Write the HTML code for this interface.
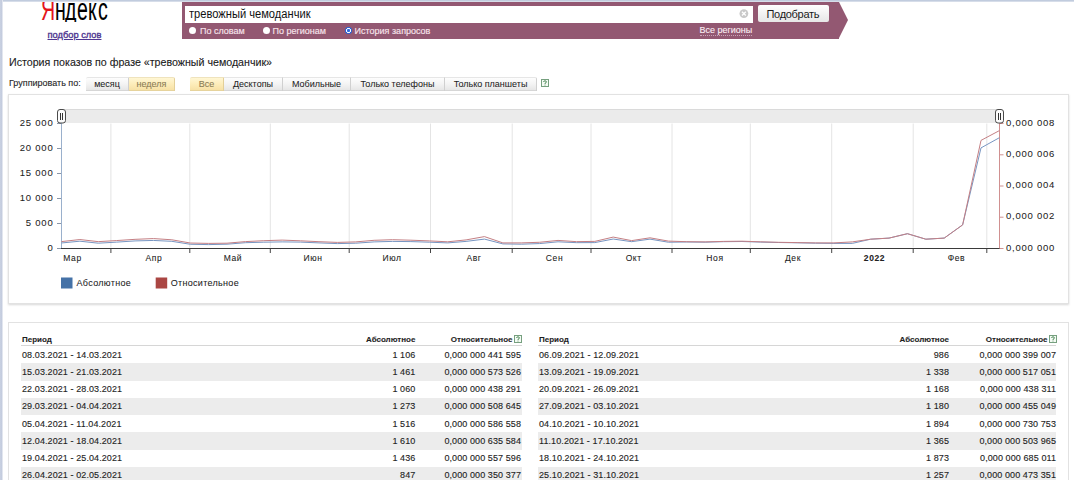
<!DOCTYPE html>
<html><head><meta charset="utf-8">
<style>
*{margin:0;padding:0;box-sizing:border-box}
html,body{width:1074px;height:480px;overflow:hidden;background:#fff;font-family:"Liberation Sans",sans-serif;color:#222}
.a{position:absolute;white-space:nowrap}
.lg{position:absolute;top:-8.1px;font-size:31px;color:#000;-webkit-text-stroke:0.1px currentColor;transform:scaleX(0.63);transform-origin:0 0;line-height:normal}
#topb{position:absolute;z-index:5;left:0;top:0;width:1074px;height:2px;background:linear-gradient(#c2cddf 0,#c0cbdd 1px,#d6dde9 1px,#d6dde9 2px)}
#leftb{position:absolute;z-index:5;left:0;top:0;width:3px;height:480px;background:linear-gradient(to right,#c9d1e2 0,#c3cbdd 2px,#e2e6ef 2px,#e2e6ef 3px)}
#sub{left:47.5px;top:30.2px;font-size:9.3px;color:#4e3590;text-decoration:underline;-webkit-text-stroke:0.35px #4e3590}
#bar{position:absolute;left:182px;top:2px;width:657px;height:36.5px;background:#935872}
#arrow{position:absolute;left:839px;top:2px;width:0;height:0;border-top:18.25px solid transparent;border-bottom:18.25px solid transparent;border-left:9px solid #935872}
#inp{position:absolute;left:185px;top:5.5px;width:568px;height:17px;background:#fff}
#q{left:189px;top:6.8px;font-size:12.3px;color:#111;transform:scaleX(0.905);transform-origin:0 0}
#clr{left:739.6px;top:9.3px;width:8.6px;height:8.6px;border-radius:50%;background:#c9c9c9;position:absolute}
#btn{position:absolute;left:758px;top:5px;width:71px;height:17px;background:linear-gradient(#fff,#e6e6e6);border-radius:2px}
#btnt{left:766.5px;top:7.5px;font-size:11px;letter-spacing:-0.3px;color:#1a1a1a}
.rad{position:absolute;width:7.4px;height:7.4px;border-radius:50%;background:#fff;top:27px}
.rl{top:26px;font-size:9px;color:#f8e4ec;-webkit-text-stroke:0.15px #f8e4ec}
#regs{left:699.5px;top:26px;font-size:9px;color:#fbeef3;border-bottom:1px dotted #c9a3b6;line-height:9px;padding-bottom:0;-webkit-text-stroke:0.1px #fbeef3}
#h1{left:9px;top:56.3px;font-size:10.66px;color:#1a1a1a;-webkit-text-stroke:0.1px #1a1a1a}
#grp{left:9px;top:78px;font-size:9px;color:#262626;-webkit-text-stroke:0.1px #262626}
.tb{position:absolute;top:76.5px;height:14px;background:linear-gradient(#fdfdfd 0,#f4f4f4 45%,#e4e4e4 100%);border-right:1px solid #d0d0d0;border-top:1px solid #e6e6e6;box-shadow:inset 0 -1px #d6d6d6;font-size:9px;text-align:center;line-height:13.5px;color:#1e1e1e;-webkit-text-stroke:0.05px #1e1e1e}
.tb.sel{background:linear-gradient(#fff6d4 0,#fdedbb 45%,#f6dfa2 100%);border-right-color:#e3cf98;border-top-color:#efe3bd;box-shadow:inset 0 -1px #e6d39c;color:#8c7d55;-webkit-text-stroke:0.1px #8c7d55}
.help{position:absolute;width:8px;height:8px;border:1px solid #7fb27f;font-size:7px;line-height:6px;text-align:center;color:#3a8a3a;font-weight:bold}
#box1{position:absolute;left:8px;top:94px;width:1061px;height:210px;border:1px solid #e2e2e2;box-shadow:0 1px 2px #d8d8d8}
#box2{position:absolute;left:8px;top:322px;width:1061px;height:170px;border:1px solid #e2e2e2}
svg{position:absolute;left:0;top:0}
.tt{font-size:8px;font-weight:bold;color:#1e1e1e;-webkit-text-stroke:0.1px #1e1e1e}
.row{position:absolute;height:17.25px}
.c{position:absolute;font-size:9px;color:#1e1e1e;letter-spacing:0.09px;-webkit-text-stroke:0.12px #1e1e1e}
</style></head><body>
<div id="topb"></div><div id="leftb"></div>
<div style="position:absolute;left:0;top:0;width:130px;height:22.3px;overflow:hidden"><div class="lg" style="left:40.6px;color:#e4141b">Я</div><div class="lg" style="left:54.9px">н</div><div class="lg" style="left:65.3px">д</div><div class="lg" style="left:76.9px">е</div><div class="lg" style="left:88px">к</div><div class="lg" style="left:97.7px">с</div></div>
<div class="a" id="sub">подбор слов</div>
<div id="bar"></div><div id="arrow"></div>
<div id="inp"></div>
<div class="a" id="q">тревожный чемоданчик</div>
<svg style="position:absolute;left:739px;top:9px" width="10" height="10" viewBox="0 0 10 10"><circle cx="4.9" cy="4.6" r="4.4" fill="#c9c9c9"/><path d="M3 2.7 L6.8 6.5 M6.8 2.7 L3 6.5" stroke="#fff" stroke-width="1.3"/></svg>
<div id="btn"></div>
<div class="a" id="btnt">Подобрать</div>
<div class="rad" style="left:188.9px"></div><div class="a rl" style="left:200px">По словам</div>
<div class="rad" style="left:262.7px"></div><div class="a rl" style="left:272.5px">По регионам</div>
<div class="rad" style="left:344.6px;background:radial-gradient(circle,#2d6be0 0,#2d6be0 1.3px,#fff 1.8px,#fff 2.2px,#2a64d8 2.8px)"></div><div class="a rl" style="left:354.6px">История запросов</div>
<div class="a" id="regs">Все регионы</div>

<div class="a" id="h1">История показов по фразе «тревожный чемоданчик»</div>
<div class="a" id="grp">Группировать по:</div>
<div class="tb" style="left:86px;width:43px;border-top-left-radius:2px">месяц</div>
<div class="tb sel" style="left:129px;width:46px;border-top-right-radius:2px">неделя</div>
<div class="tb sel" style="left:190px;width:34px;border-top-left-radius:2px">Все</div>
<div class="tb" style="left:224px;width:59px">Десктопы</div>
<div class="tb" style="left:283px;width:68px">Мобильные</div>
<div class="tb" style="left:351px;width:94px">Только телефоны</div>
<div class="tb" style="left:445px;width:92px;border-top-right-radius:2px">Только планшеты</div>
<svg style="position:absolute;left:540.5px;top:79px" width="8" height="8" viewBox="0 0 8 8"><rect x="0.5" y="0.5" width="7" height="7" fill="#f4fbf4" stroke="#76a07f" stroke-width="1"/><path d="M2.6 3 Q2.6 1.8 4 1.8 Q5.4 1.8 5.4 3 Q5.4 3.8 4 4.3 L4 5" fill="none" stroke="#3f7f4c" stroke-width="0.9"/><rect x="3.55" y="5.6" width="0.9" height="0.9" fill="#3f7f4c"/></svg>

<div id="box1"></div>
<div id="box2"></div>
<svg width="1074" height="480" style="font-family:'Liberation Sans',sans-serif">
<rect x="61.5" y="109" width="937" height="14" fill="#ebebeb"/><line x1="61.5" y1="109.5" x2="998" y2="109.5" stroke="#dadada" stroke-width="1"/>
<line x1="110.9" y1="123.5" x2="110.9" y2="247.5" stroke="#e4e4e4" stroke-width="1"/>
<line x1="110.9" y1="248" x2="110.9" y2="253" stroke="#444" stroke-width="1"/>
<line x1="189.8" y1="123.5" x2="189.8" y2="247.5" stroke="#e4e4e4" stroke-width="1"/>
<line x1="189.8" y1="248" x2="189.8" y2="253" stroke="#444" stroke-width="1"/>
<line x1="270.3" y1="123.5" x2="270.3" y2="247.5" stroke="#e4e4e4" stroke-width="1"/>
<line x1="270.3" y1="248" x2="270.3" y2="253" stroke="#444" stroke-width="1"/>
<line x1="349.2" y1="123.5" x2="349.2" y2="247.5" stroke="#e4e4e4" stroke-width="1"/>
<line x1="349.2" y1="248" x2="349.2" y2="253" stroke="#444" stroke-width="1"/>
<line x1="430.5" y1="123.5" x2="430.5" y2="247.5" stroke="#e4e4e4" stroke-width="1"/>
<line x1="430.5" y1="248" x2="430.5" y2="253" stroke="#444" stroke-width="1"/>
<line x1="512.2" y1="123.5" x2="512.2" y2="247.5" stroke="#e4e4e4" stroke-width="1"/>
<line x1="512.2" y1="248" x2="512.2" y2="253" stroke="#444" stroke-width="1"/>
<line x1="591" y1="123.5" x2="591" y2="247.5" stroke="#e4e4e4" stroke-width="1"/>
<line x1="591" y1="248" x2="591" y2="253" stroke="#444" stroke-width="1"/>
<line x1="672" y1="123.5" x2="672" y2="247.5" stroke="#e4e4e4" stroke-width="1"/>
<line x1="672" y1="248" x2="672" y2="253" stroke="#444" stroke-width="1"/>
<line x1="750.3" y1="123.5" x2="750.3" y2="247.5" stroke="#e4e4e4" stroke-width="1"/>
<line x1="750.3" y1="248" x2="750.3" y2="253" stroke="#444" stroke-width="1"/>
<line x1="831.7" y1="123.5" x2="831.7" y2="247.5" stroke="#e4e4e4" stroke-width="1"/>
<line x1="831.7" y1="248" x2="831.7" y2="253" stroke="#444" stroke-width="1"/>
<line x1="913.2" y1="123.5" x2="913.2" y2="247.5" stroke="#e4e4e4" stroke-width="1"/>
<line x1="913.2" y1="248" x2="913.2" y2="253" stroke="#444" stroke-width="1"/>
<line x1="986.8" y1="123.5" x2="986.8" y2="247.5" stroke="#e4e4e4" stroke-width="1"/>
<line x1="986.8" y1="248" x2="986.8" y2="253" stroke="#444" stroke-width="1"/>
<line x1="61.5" y1="123" x2="61.5" y2="248" stroke="#9ab0cc" stroke-width="1"/>
<line x1="999.5" y1="123" x2="999.5" y2="248" stroke="#d09090" stroke-width="1"/>
<line x1="61" y1="248.5" x2="1000" y2="248.5" stroke="#3a3a3a" stroke-width="1"/>
<line x1="57" y1="248.5" x2="61" y2="248.5" stroke="#8a96a8" stroke-width="1"/>
<text x="53.5" y="250.7" text-anchor="end" font-size="9.5" letter-spacing="0.8" fill="#222" stroke="#222" stroke-width="0.05">0</text>
<line x1="57" y1="223.5" x2="61" y2="223.5" stroke="#8a96a8" stroke-width="1"/>
<text x="53.5" y="225.7" text-anchor="end" font-size="9.5" letter-spacing="0.8" fill="#222" stroke="#222" stroke-width="0.05">5 000</text>
<line x1="57" y1="198.5" x2="61" y2="198.5" stroke="#8a96a8" stroke-width="1"/>
<text x="53.5" y="200.7" text-anchor="end" font-size="9.5" letter-spacing="0.8" fill="#222" stroke="#222" stroke-width="0.05">10 000</text>
<line x1="57" y1="173.5" x2="61" y2="173.5" stroke="#8a96a8" stroke-width="1"/>
<text x="53.5" y="175.7" text-anchor="end" font-size="9.5" letter-spacing="0.8" fill="#222" stroke="#222" stroke-width="0.05">15 000</text>
<line x1="57" y1="148.5" x2="61" y2="148.5" stroke="#8a96a8" stroke-width="1"/>
<text x="53.5" y="150.7" text-anchor="end" font-size="9.5" letter-spacing="0.8" fill="#222" stroke="#222" stroke-width="0.05">20 000</text>
<line x1="57" y1="123.5" x2="61" y2="123.5" stroke="#8a96a8" stroke-width="1"/>
<text x="53.5" y="125.7" text-anchor="end" font-size="9.5" letter-spacing="0.8" fill="#222" stroke="#222" stroke-width="0.05">25 000</text>
<line x1="999.5" y1="248.5" x2="1003.5" y2="248.5" stroke="#d09090" stroke-width="1"/>
<text x="1006" y="250.7" font-size="9.5" letter-spacing="0.75" fill="#222" stroke="#222" stroke-width="0.05">0,000 000</text>
<line x1="999.5" y1="217.2" x2="1003.5" y2="217.2" stroke="#d09090" stroke-width="1"/>
<text x="1006" y="219.4" font-size="9.5" letter-spacing="0.75" fill="#222" stroke="#222" stroke-width="0.05">0,000 002</text>
<line x1="999.5" y1="186.0" x2="1003.5" y2="186.0" stroke="#d09090" stroke-width="1"/>
<text x="1006" y="188.2" font-size="9.5" letter-spacing="0.75" fill="#222" stroke="#222" stroke-width="0.05">0,000 004</text>
<line x1="999.5" y1="154.8" x2="1003.5" y2="154.8" stroke="#d09090" stroke-width="1"/>
<text x="1006" y="156.9" font-size="9.5" letter-spacing="0.75" fill="#222" stroke="#222" stroke-width="0.05">0,000 006</text>
<line x1="999.5" y1="123.5" x2="1003.5" y2="123.5" stroke="#d09090" stroke-width="1"/>
<text x="1006" y="125.7" font-size="9.5" letter-spacing="0.75" fill="#222" stroke="#222" stroke-width="0.05">0,000 008</text>
<text x="72.5" y="260.5" text-anchor="middle" font-size="8.5" letter-spacing="0.6" fill="#222" stroke="#222" stroke-width="0.08">Мар</text>
<text x="154" y="260.5" text-anchor="middle" font-size="8.5" letter-spacing="0.6" fill="#222" stroke="#222" stroke-width="0.08">Апр</text>
<text x="233" y="260.5" text-anchor="middle" font-size="8.5" letter-spacing="0.6" fill="#222" stroke="#222" stroke-width="0.08">Май</text>
<text x="313" y="260.5" text-anchor="middle" font-size="8.5" letter-spacing="0.6" fill="#222" stroke="#222" stroke-width="0.08">Июн</text>
<text x="392" y="260.5" text-anchor="middle" font-size="8.5" letter-spacing="0.6" fill="#222" stroke="#222" stroke-width="0.08">Июл</text>
<text x="474" y="260.5" text-anchor="middle" font-size="8.5" letter-spacing="0.6" fill="#222" stroke="#222" stroke-width="0.08">Авг</text>
<text x="554.5" y="260.5" text-anchor="middle" font-size="8.5" letter-spacing="0.6" fill="#222" stroke="#222" stroke-width="0.08">Сен</text>
<text x="633.7" y="260.5" text-anchor="middle" font-size="8.5" letter-spacing="0.6" fill="#222" stroke="#222" stroke-width="0.08">Окт</text>
<text x="715" y="260.5" text-anchor="middle" font-size="8.5" letter-spacing="0.6" fill="#222" stroke="#222" stroke-width="0.08">Ноя</text>
<text x="793" y="260.5" text-anchor="middle" font-size="8.5" letter-spacing="0.6" fill="#222" stroke="#222" stroke-width="0.08">Дек</text>
<text x="874.5" y="260.5" text-anchor="middle" font-size="8.5" letter-spacing="0.6" font-weight="bold" fill="#222" stroke="#222" stroke-width="0.08">2022</text>
<text x="956.5" y="260.5" text-anchor="middle" font-size="8.5" letter-spacing="0.6" fill="#222" stroke="#222" stroke-width="0.08">Фев</text>
<polyline points="61.50,242.97 79.89,241.19 98.28,243.20 116.67,242.13 135.06,240.92 153.45,240.45 171.84,241.32 190.23,244.26 208.62,244.60 227.01,244.20 245.40,242.70 263.79,242.20 282.18,241.90 300.57,242.10 318.96,242.90 337.35,243.60 355.74,243.20 374.13,241.90 392.52,241.40 410.91,241.60 429.30,242.20 447.69,242.90 466.08,241.40 484.47,239.10 502.86,243.90 521.25,244.20 539.65,243.57 558.04,241.81 576.43,242.66 594.82,242.60 613.21,239.03 631.60,241.68 649.99,239.13 668.38,242.22 686.77,242.00 705.16,242.20 723.55,241.70 741.94,241.50 760.33,242.10 778.72,242.50 797.11,242.80 815.50,243.20 833.89,243.40 852.28,243.40 870.67,239.20 889.06,238.10 907.45,233.70 925.84,239.20 944.23,238.10 962.62,224.90 981.01,147.90 999.40,137.70" fill="none" stroke="#7896c2" stroke-width="1"/>
<polyline points="61.50,241.60 79.89,239.54 98.28,241.65 116.67,240.55 135.06,239.33 153.45,238.57 171.84,239.79 190.23,243.03 208.62,243.40 227.01,243.20 245.40,241.60 263.79,240.70 282.18,240.10 300.57,240.80 318.96,241.70 337.35,242.40 355.74,241.90 374.13,240.30 392.52,239.70 410.91,240.20 429.30,240.90 447.69,241.80 466.08,239.90 484.47,236.60 502.86,242.90 521.25,242.90 539.65,242.27 558.04,240.42 576.43,241.65 594.82,241.39 613.21,237.08 631.60,240.62 649.99,237.80 668.38,241.10 686.77,241.70 705.16,241.90 723.55,241.40 741.94,241.20 760.33,241.80 778.72,242.30 797.11,242.60 815.50,242.90 833.89,242.90 852.28,241.90 870.67,239.20 889.06,238.10 907.45,233.70 925.84,239.20 944.23,238.10 962.62,224.90 981.01,140.40 999.40,130.60" fill="none" stroke="#c47f84" stroke-width="1"/>
<rect x="57.5" y="109.5" width="8" height="13.5" rx="2.5" fill="#fbfbfb" stroke="#4a4a4a" stroke-width="1"/>
<line x1="60.5" y1="113" x2="60.5" y2="120" stroke="#333" stroke-width="1"/>
<line x1="62.5" y1="113" x2="62.5" y2="120" stroke="#333" stroke-width="1"/>
<rect x="995.5" y="109.5" width="8" height="13.5" rx="2.5" fill="#fbfbfb" stroke="#4a4a4a" stroke-width="1"/>
<line x1="998.5" y1="113" x2="998.5" y2="120" stroke="#333" stroke-width="1"/>
<line x1="1000.5" y1="113" x2="1000.5" y2="120" stroke="#333" stroke-width="1"/>
<rect x="61" y="277.5" width="11.5" height="11" fill="#4572a7"/>
<text x="76.5" y="286.3" font-size="9" letter-spacing="0.33" fill="#222" stroke="#222" stroke-width="0.06">Абсолютное</text>
<rect x="155.7" y="277.5" width="11.5" height="11" fill="#aa4643"/>
<text x="170.7" y="286.3" font-size="9" letter-spacing="0.31" fill="#222" stroke="#222" stroke-width="0.06">Относительное</text>
</svg>
<div class="a tt" style="left:22px;top:335px">Период</div>
<div class="a tt" style="right:658.6px;top:335px">Абсолютное</div>
<div class="a tt" style="right:561.5px;top:335px">Относительное</div>
<svg style="position:absolute;left:513.5px;top:335px" width="8" height="8" viewBox="0 0 8 8"><rect x="0.5" y="0.5" width="7" height="7" fill="#f4fbf4" stroke="#76a07f" stroke-width="1"/><path d="M2.6 3 Q2.6 1.8 4 1.8 Q5.4 1.8 5.4 3 Q5.4 3.8 4 4.3 L4 5" fill="none" stroke="#3f7f4c" stroke-width="0.9"/><rect x="3.55" y="5.6" width="0.9" height="0.9" fill="#3f7f4c"/></svg>
<div style="position:absolute;left:21px;top:345px;width:501.4px;height:1px;background:#d6d6d6"></div>
<div class="row" style="left:21px;top:346.00px;width:501.4px;background:transparent"></div>
<div class="a c" style="left:22px;top:349.60px">08.03.2021 - 14.03.2021</div>
<div class="a c" style="right:658.6px;top:349.60px">1 106</div>
<div class="a c" style="right:553px;top:349.60px">0,000 000 441 595</div>
<div class="row" style="left:21px;top:363.25px;width:501.4px;background:#ececec"></div>
<div class="a c" style="left:22px;top:366.85px">15.03.2021 - 21.03.2021</div>
<div class="a c" style="right:658.6px;top:366.85px">1 461</div>
<div class="a c" style="right:553px;top:366.85px">0,000 000 573 526</div>
<div class="row" style="left:21px;top:380.50px;width:501.4px;background:transparent"></div>
<div class="a c" style="left:22px;top:384.10px">22.03.2021 - 28.03.2021</div>
<div class="a c" style="right:658.6px;top:384.10px">1 060</div>
<div class="a c" style="right:553px;top:384.10px">0,000 000 438 291</div>
<div class="row" style="left:21px;top:397.75px;width:501.4px;background:#ececec"></div>
<div class="a c" style="left:22px;top:401.35px">29.03.2021 - 04.04.2021</div>
<div class="a c" style="right:658.6px;top:401.35px">1 273</div>
<div class="a c" style="right:553px;top:401.35px">0,000 000 508 645</div>
<div class="row" style="left:21px;top:415.00px;width:501.4px;background:transparent"></div>
<div class="a c" style="left:22px;top:418.60px">05.04.2021 - 11.04.2021</div>
<div class="a c" style="right:658.6px;top:418.60px">1 516</div>
<div class="a c" style="right:553px;top:418.60px">0,000 000 586 558</div>
<div class="row" style="left:21px;top:432.25px;width:501.4px;background:#ececec"></div>
<div class="a c" style="left:22px;top:435.85px">12.04.2021 - 18.04.2021</div>
<div class="a c" style="right:658.6px;top:435.85px">1 610</div>
<div class="a c" style="right:553px;top:435.85px">0,000 000 635 584</div>
<div class="row" style="left:21px;top:449.50px;width:501.4px;background:transparent"></div>
<div class="a c" style="left:22px;top:453.10px">19.04.2021 - 25.04.2021</div>
<div class="a c" style="right:658.6px;top:453.10px">1 436</div>
<div class="a c" style="right:553px;top:453.10px">0,000 000 557 596</div>
<div class="row" style="left:21px;top:466.75px;width:501.4px;background:#ececec"></div>
<div class="a c" style="left:22px;top:470.35px">26.04.2021 - 02.05.2021</div>
<div class="a c" style="right:658.6px;top:470.35px">847</div>
<div class="a c" style="right:553px;top:470.35px">0,000 000 350 377</div>
<div class="a tt" style="left:539px;top:335px">Период</div>
<div class="a tt" style="right:125px;top:335px">Абсолютное</div>
<div class="a tt" style="right:26.5px;top:335px">Относительное</div>
<svg style="position:absolute;left:1048.5px;top:335px" width="8" height="8" viewBox="0 0 8 8"><rect x="0.5" y="0.5" width="7" height="7" fill="#f4fbf4" stroke="#76a07f" stroke-width="1"/><path d="M2.6 3 Q2.6 1.8 4 1.8 Q5.4 1.8 5.4 3 Q5.4 3.8 4 4.3 L4 5" fill="none" stroke="#3f7f4c" stroke-width="0.9"/><rect x="3.55" y="5.6" width="0.9" height="0.9" fill="#3f7f4c"/></svg>
<div style="position:absolute;left:538px;top:345px;width:518px;height:1px;background:#d6d6d6"></div>
<div class="row" style="left:538px;top:346.00px;width:518px;background:transparent"></div>
<div class="a c" style="left:539px;top:349.60px">06.09.2021 - 12.09.2021</div>
<div class="a c" style="right:125px;top:349.60px">986</div>
<div class="a c" style="right:18px;top:349.60px">0,000 000 399 007</div>
<div class="row" style="left:538px;top:363.25px;width:518px;background:#ececec"></div>
<div class="a c" style="left:539px;top:366.85px">13.09.2021 - 19.09.2021</div>
<div class="a c" style="right:125px;top:366.85px">1 338</div>
<div class="a c" style="right:18px;top:366.85px">0,000 000 517 051</div>
<div class="row" style="left:538px;top:380.50px;width:518px;background:transparent"></div>
<div class="a c" style="left:539px;top:384.10px">20.09.2021 - 26.09.2021</div>
<div class="a c" style="right:125px;top:384.10px">1 168</div>
<div class="a c" style="right:18px;top:384.10px">0,000 000 438 311</div>
<div class="row" style="left:538px;top:397.75px;width:518px;background:#ececec"></div>
<div class="a c" style="left:539px;top:401.35px">27.09.2021 - 03.10.2021</div>
<div class="a c" style="right:125px;top:401.35px">1 180</div>
<div class="a c" style="right:18px;top:401.35px">0,000 000 455 049</div>
<div class="row" style="left:538px;top:415.00px;width:518px;background:transparent"></div>
<div class="a c" style="left:539px;top:418.60px">04.10.2021 - 10.10.2021</div>
<div class="a c" style="right:125px;top:418.60px">1 894</div>
<div class="a c" style="right:18px;top:418.60px">0,000 000 730 753</div>
<div class="row" style="left:538px;top:432.25px;width:518px;background:#ececec"></div>
<div class="a c" style="left:539px;top:435.85px">11.10.2021 - 17.10.2021</div>
<div class="a c" style="right:125px;top:435.85px">1 365</div>
<div class="a c" style="right:18px;top:435.85px">0,000 000 503 965</div>
<div class="row" style="left:538px;top:449.50px;width:518px;background:transparent"></div>
<div class="a c" style="left:539px;top:453.10px">18.10.2021 - 24.10.2021</div>
<div class="a c" style="right:125px;top:453.10px">1 873</div>
<div class="a c" style="right:18px;top:453.10px">0,000 000 685 011</div>
<div class="row" style="left:538px;top:466.75px;width:518px;background:#ececec"></div>
<div class="a c" style="left:539px;top:470.35px">25.10.2021 - 31.10.2021</div>
<div class="a c" style="right:125px;top:470.35px">1 257</div>
<div class="a c" style="right:18px;top:470.35px">0,000 000 473 351</div>
</body></html>
